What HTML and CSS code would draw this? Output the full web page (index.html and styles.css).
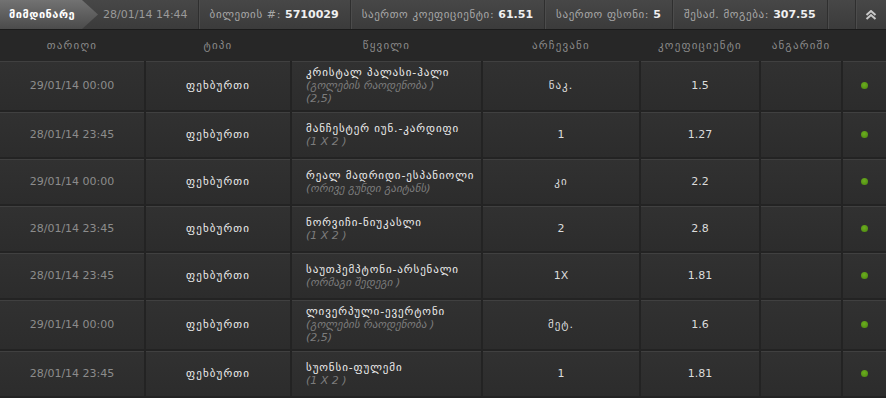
FILE: index.html
```html
<!DOCTYPE html>
<html>
<head>
<meta charset="utf-8">
<link rel="stylesheet" href="styles.css">
</head>
<body>
<div class="panel">
  <div class="topbar">
    <div class="tab">მიმდინარე</div>
    <div class="item item-date">28/01/14 14:44</div>
    <div class="item"><span class="lbl">ბილეთის #: </span><b>5710029</b></div>
    <div class="item"><span class="lbl">საერთო კოეფიციენტი: </span><b>61.51</b></div>
    <div class="item"><span class="lbl">საერთო ფსონი: </span><b>5</b></div>
    <div class="item"><span class="lbl">შესაძ. მოგება: </span><b>307.55</b></div>
    <div class="item item-fill"></div>
    <div class="item item-toggle">
      <svg width="12" height="10" viewBox="0 0 12 10"><path d="M1.5 5 L6 1 L10.5 5 M1.5 9 L6 5 L10.5 9" fill="none" stroke="#c8c8c8" stroke-width="2"/></svg>
    </div>
  </div>
  <div class="grid head">
    <div>თარიღი</div>
    <div>ტიპი</div>
    <div>წყვილი</div>
    <div>არჩევანი</div>
    <div>კოეფიციენტი</div>
    <div>ანგარიში</div>
    <div></div>
  </div>

  <div class="grid row">
    <div class="c date">29/01/14 00:00</div>
    <div class="c type">ფეხბურთი</div>
    <div class="c pair"><span class="team">კრისტალ პალასი-ჰალი</span><span class="sub">(გოლების რაოდენობა )</span><span class="sub">(2,5)</span></div>
    <div class="c val ka">ნაკ.</div>
    <div class="c val">1.5</div>
    <div class="c"></div>
    <div class="c"><span class="dot"></span></div>
  </div>
  <div class="grid row">
    <div class="c date">28/01/14 23:45</div>
    <div class="c type">ფეხბურთი</div>
    <div class="c pair"><span class="team">მანჩესტერ იუნ.-კარდიფი</span><span class="sub">(1 X 2 )</span></div>
    <div class="c val">1</div>
    <div class="c val">1.27</div>
    <div class="c"></div>
    <div class="c"><span class="dot"></span></div>
  </div>
  <div class="grid row">
    <div class="c date">29/01/14 00:00</div>
    <div class="c type">ფეხბურთი</div>
    <div class="c pair"><span class="team">რეალ მადრიდი-ესპანიოლი</span><span class="sub">(ორივე გუნდი გაიტანს)</span></div>
    <div class="c val ka">კი</div>
    <div class="c val">2.2</div>
    <div class="c"></div>
    <div class="c"><span class="dot"></span></div>
  </div>
  <div class="grid row">
    <div class="c date">28/01/14 23:45</div>
    <div class="c type">ფეხბურთი</div>
    <div class="c pair"><span class="team">ნორვიჩი-ნიუკასლი</span><span class="sub">(1 X 2 )</span></div>
    <div class="c val">2</div>
    <div class="c val">2.8</div>
    <div class="c"></div>
    <div class="c"><span class="dot"></span></div>
  </div>
  <div class="grid row">
    <div class="c date">28/01/14 23:45</div>
    <div class="c type">ფეხბურთი</div>
    <div class="c pair"><span class="team">საუთჰემპტონი-არსენალი</span><span class="sub">(ორმაგი შედეგი )</span></div>
    <div class="c val">1X</div>
    <div class="c val">1.81</div>
    <div class="c"></div>
    <div class="c"><span class="dot"></span></div>
  </div>
  <div class="grid row">
    <div class="c date">29/01/14 00:00</div>
    <div class="c type">ფეხბურთი</div>
    <div class="c pair"><span class="team">ლივერპული-ევერტონი</span><span class="sub">(გოლების რაოდენობა )</span><span class="sub">(2,5)</span></div>
    <div class="c val ka">მეტ.</div>
    <div class="c val">1.6</div>
    <div class="c"></div>
    <div class="c"><span class="dot"></span></div>
  </div>
  <div class="grid row">
    <div class="c date">28/01/14 23:45</div>
    <div class="c type">ფეხბურთი</div>
    <div class="c pair"><span class="team">სუონსი-ფულემი</span><span class="sub">(1 X 2 )</span></div>
    <div class="c val">1</div>
    <div class="c val">1.81</div>
    <div class="c"></div>
    <div class="c"><span class="dot"></span></div>
  </div>
</div>
</body>
</html>
```
FILE: styles.css
```css
html, body {
  margin: 0;
  padding: 0;
  background: #232323;
}
body {
  font-family: "DejaVu Sans", sans-serif;
  font-size: 11px;
  color: #ddd;
  width: 886px;
  height: 398px;
  overflow: hidden;
}
.panel {
  width: 886px;
}
.topbar {
  display: flex;
  height: 29px;
  background: linear-gradient(#474747, #3b3b3b);
  border-bottom: 1px solid #1b1b1b;
  align-items: stretch;
}
.tab {
  width: 98px;
  flex: none;
  box-sizing: border-box;
  padding-left: 9px;
  display: flex;
  align-items: center;
  color: #fff;
  font-weight: bold;
  letter-spacing: 0.5px;
  background: linear-gradient(#727272, #4b4b4b);
  clip-path: polygon(0 0, 82px 0, 98px 50%, 82px 100%, 0 100%);
}
.item {
  display: flex;
  align-items: center;
  padding: 0 11px;
  color: #a8a8a8;
  border-left: 1px solid #2f2f2f;
  box-shadow: inset 1px 0 #4c4c4c;
  white-space: pre;
}
.lbl {
  letter-spacing: 0.6px;
}
.item b {
  color: #f0f0f0;
  font-weight: bold;
}
.item-date {
  border-left: none;
  box-shadow: none;
  padding: 0 10px 0 5px;
  color: #9a9a9a;
}
.item-fill {
  flex: 1;
  padding: 0;
}
.item-toggle {
  width: 31px;
  padding: 0;
  justify-content: center;
  box-sizing: border-box;
}
.grid {
  display: grid;
  grid-template-columns: 144px 144px 189px 156px 118px 80px 43px;
  column-gap: 2px;
}
.head {
  height: 31px;
  background: #272727;
  color: #8a8a8a;
  align-items: center;
  text-align: center;
  letter-spacing: 1.2px;
}
.row {
  margin-bottom: 2px;
}
.c {
  background: linear-gradient(#313131, #2c2c2c);
  border-top: 1px solid #404040;
  padding: 4px 0 5px;
  min-height: 35px;
  display: flex;
  align-items: center;
  justify-content: center;
}
.date {
  color: #8c8c8c;
}
.type {
  color: #ececec;
  letter-spacing: 1.1px;
}
.val {
  color: #dcdcdc;
}
.ka {
  letter-spacing: 1px;
}
.pair {
  flex-direction: column;
  align-items: flex-start;
  justify-content: center;
  padding-left: 14px;
  line-height: 13px;
}
.team {
  color: #ececec;
  letter-spacing: 0.9px;
}
.sub {
  color: #7c7c7c;
  font-style: italic;
}
.dot {
  width: 7px;
  height: 7px;
  border-radius: 50%;
  background: radial-gradient(circle at 45% 40%, #6cae1f, #4a8510);
}
```
